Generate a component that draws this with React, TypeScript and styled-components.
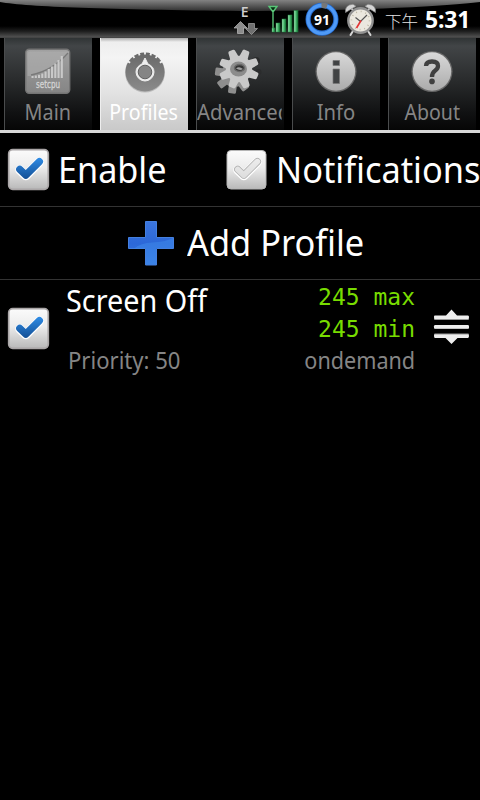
import React from "react";
import styled, { createGlobalStyle } from "styled-components";

const GlobalStyle = createGlobalStyle`
  html, body { margin: 0; background: #000; }
  body { width: 480px; height: 800px; overflow: hidden; }
  svg { display: block; flex: none; }
`;

const sans = `"Noto Sans", "Open Sans", "Noto Sans CJK TC", sans-serif`;

const Screen = styled.main`
  width: 480px;
  height: 800px;
  overflow: hidden;
  display: flex;
  flex-direction: column;
  background: #000;
  color: #fff;
  font-family: ${sans};
`;

const Text = styled.span<{ $size: number; $stretch?: number; $color?: string; $right?: boolean }>`
  display: block;
  flex: none;
  white-space: nowrap;
  font-size: ${(p) => p.$size}px;
  line-height: 1.2;
  color: ${(p) => p.$color ?? "#fff"};
  transform: scaleX(${(p) => p.$stretch ?? 1});
  transform-origin: ${(p) => (p.$right ? "right" : "left")} center;
`;

/* Status bar */
const StatusBar = styled.header`
  height: 38px;
  flex: none;
  display: grid;
  background: linear-gradient(#000 0, #000 26px, #1c1c1c 31px, #505050 37px, #3a3a3a 38px);
  > * { grid-area: 1 / 1; }
`;

const StatusItems = styled.div`
  display: flex;
  align-items: flex-start;
  padding-left: 233px;
`;

const StatusIcon = styled.div<{ $width: number }>`
  width: ${(p) => p.$width}px;
  flex: none;
`;

const Meridiem = styled.span`
  width: 44px;
  padding-left: 4px;
  box-sizing: border-box;
  font: 16.5px/20px "Noto Sans CJK TC", sans-serif;
  font-weight: 300;
  color: #e4e4e4;
  margin-top: 11px;
  white-space: nowrap;
`;

const Clock = styled.span`
  font: bold 23px/28px ${sans};
  margin-top: 5px;
  letter-spacing: -0.2px;
`;

/* Tabs */
const TabBar = styled.nav`
  height: 92px;
  flex: none;
  display: flex;
  gap: 8px;
  padding: 0 4px;
  border-bottom: 3px solid #d8d8d8;
`;

const Tab = styled.div<{ $active?: boolean }>`
  width: 88px;
  box-sizing: border-box;
  overflow: hidden;
  display: flex;
  flex-direction: column;
  align-items: center;
  padding: 9px 1px 0 0;
  border-left: 1px solid ${(p) => (p.$active ? "#eee" : "#4a4c4d")};
  background: ${(p) =>
    p.$active
      ? "linear-gradient(#aaa 0, #eee 4px, #f4f4f4 20px, #e2e2e2 60%, #c9c9c9)"
      : "linear-gradient(#303435 0, #424547 8px, #2a2c2d 45%, #101112 82%, #060606)"};
`;

const TabLabel = styled.span<{ $active?: boolean; $stretch: number; $clip?: boolean }>`
  margin-top: 1px;
  align-self: ${(p) => (p.$clip ? "flex-start" : "center")};
  font-size: 22px;
  line-height: 26px;
  white-space: nowrap;
  color: ${(p) => (p.$active ? "#fff" : "#858585")};
  transform: scaleX(${(p) => p.$stretch});
  transform-origin: ${(p) => (p.$clip ? "left" : "center")};
  ${(p) => p.$clip && "width: 92px; overflow: hidden;"}
`;

/* Content */
const OptionsRow = styled.section`
  height: 73px;
  flex: none;
  display: flex;
  align-items: center;
  border-bottom: 1px solid #333;
`;

const Option = styled.label<{ $width: number }>`
  width: ${(p) => p.$width}px;
  flex: none;
  display: flex;
  align-items: center;
  gap: 8px;
  padding-left: 7px;
  box-sizing: border-box;
`;

const AddRow = styled.section`
  height: 72px;
  flex: none;
  display: flex;
  align-items: center;
  gap: 12px;
  padding-left: 127px;
  border-bottom: 1px solid #333;
`;

const ProfileRow = styled.section`
  height: 98px;
  flex: none;
  display: grid;
  grid-template-columns: 66px 1fr 160px 65px;
`;

const CheckCell = styled.div`
  padding: 27px 0 0 7px;
`;

const ProfileInfo = styled.div`
  display: flex;
  flex-direction: column;
  justify-content: space-between;
  padding: 3px 0 3px;
`;

const Priority = styled.div`
  padding-left: 2px;
`;

const Limits = styled.div`
  display: flex;
  flex-direction: column;
  align-items: flex-end;
  padding-top: 1px;
`;

const Frequency = styled.span`
  font: 23px/32px "DejaVu Sans Mono", monospace;
  color: #78dc00;
  white-space: pre;
`;

const Governor = styled.div`
  padding-top: 1px;
`;

const HandleCell = styled.div`
  padding: 28px 0 0 18px;
`;

function CheckBox({ checked }: { checked?: boolean }) {
  const id = checked ? "tick-on" : "tick-off";
  const mark = "M12.8 21.4 18.8 27.2 32.4 13.6";
  return (
    <svg width="43" height="43" viewBox="0 0 43 43">
      <defs>
        <linearGradient id={`${id}-box`} x2="0" y2="1">
          <stop offset="0" stopColor="#fbfbfb" />
          <stop offset=".45" stopColor="#ececec" />
          <stop offset="1" stopColor="#b9b9b9" />
        </linearGradient>
        <linearGradient id={`${id}-mark`} gradientUnits="userSpaceOnUse" x1="0" y1="10" x2="0" y2="31">
          <stop offset="0" stopColor={checked ? "#2f8be4" : "#ededed"} />
          <stop offset="1" stopColor={checked ? "#145096" : "#dcdcdc"} />
        </linearGradient>
      </defs>
      <rect
        x={checked ? 1.7 : 2} y={checked ? 1.7 : 2.5}
        width={checked ? 39.6 : 39} height={checked ? 39.6 : 38.5} rx="4"
        fill={`url(#${id}-box)`} stroke={checked ? "#aaa6a7" : "#b5b5b5"} strokeWidth={checked ? 1.7 : 1}
      />
      <g fill="none" strokeLinecap="round" strokeLinejoin="round">
        <path d={mark} transform="translate(0 .5)" stroke="#fff" strokeWidth="9.2" />
        {!checked && <path d={mark} stroke="#b4b4b4" strokeWidth="7.4" />}
        <path d={mark} stroke={`url(#${id}-mark)`} strokeWidth={checked ? 7.3 : 5.6} />
      </g>
    </svg>
  );
}

function StatusGloss() {
  return (
    <svg width="480" height="38" viewBox="0 0 480 38">
      <defs>
        <linearGradient id="gloss" gradientUnits="userSpaceOnUse" x1="0" y1="0" x2="0" y2="11">
          <stop offset="0" stopColor="#828282" />
          <stop offset="1" stopColor="#303030" />
        </linearGradient>
      </defs>
      <path d="M0 0H480V2C445 6 365 11 240 11 110 9.5 28 7 0 2Z" fill="url(#gloss)" />
    </svg>
  );
}

function DataIcon() {
  return (
    <svg width="28" height="38" viewBox="233 0 28 38">
      <text x="240.8" y="17" fontSize="14" fontWeight="600" fill="#d0d0d0" fontFamily="Open Sans">E</text>
      <path d="M240.5 21.5 247 28H243.5V33.5H237.5V28H234Z" fill="#8b8b8b" stroke="#bbb" strokeWidth=".7" />
      <path d="M248.5 23.5H254.5V28.5H257.5L251.5 34.5 245.5 28.5H248.5Z" fill="#707070" stroke="#a8a8a8" strokeWidth=".7" />
    </svg>
  );
}

function SignalIcon() {
  return (
    <svg width="43" height="38" viewBox="261 0 43 38">
      <defs>
        <linearGradient id="bars">
          <stop offset="0" stopColor="#b0edc1" />
          <stop offset=".5" stopColor="#45b86b" />
          <stop offset="1" stopColor="#13672f" />
        </linearGradient>
      </defs>
      <path d="M269 6.5H277L273 12ZM273 10V32" fill="#062e12" stroke="#58c577" strokeWidth="1.4" />
      <g fill="url(#bars)" stroke="#228441" strokeWidth=".5">
        <rect x="272" y="28" width="3" height="4" />
        <rect x="276" y="23" width="4" height="9" />
        <rect x="282" y="19" width="4" height="13" />
        <rect x="288" y="15" width="4" height="17" />
        <rect x="294" y="10.5" width="4" height="21.5" />
      </g>
    </svg>
  );
}

function BatteryIcon() {
  return (
    <svg width="38" height="38" viewBox="304 0 38 38">
      <circle cx="322" cy="19.3" r="13.9" fill="#080808" stroke="#2369ce" strokeWidth="5.2" />
      <circle cx="322" cy="19.3" r="14" fill="none" stroke="#4f9af6" strokeWidth="3.4" />
      <path d="M321.5 5.3A14 14 0 0 1 327 6.2" fill="none" stroke="#777" strokeWidth="5.2" />
      <text x="322" y="24.5" fontSize="14" textAnchor="middle" fontWeight="700" fill="#fff" fontFamily="Noto Sans">91</text>
    </svg>
  );
}

function AlarmIcon() {
  return (
    <svg width="39" height="38" viewBox="342 0 39 38">
      <g stroke="#d6d6d6" strokeWidth="2" strokeLinecap="round">
        <path d="M353 31 350.5 35M368 31 370.5 35M352 9 354 12M369 9 367 12" />
      </g>
      <path d="M345.5 12.5Q344.5 5 353 4.2L356 6.2Z" fill="#d5d5d5" stroke="#888" strokeWidth=".7" />
      <path d="M375.5 12.5Q376.5 5 368 4.2L365 6.2Z" fill="#d5d5d5" stroke="#888" strokeWidth=".7" />
      <circle cx="360.5" cy="20.5" r="12.2" fill="#ebe8df" stroke="#919191" strokeWidth="2.4" />
      <circle cx="360.5" cy="20.5" r="9" fill="none" stroke="#b5ae99" strokeWidth="1.6" strokeDasharray=".8 3.91" />
      <path d="M355.5 17.5 360.5 21.5 367 15" fill="none" stroke="#555" strokeWidth="1.2" />
      <path d="M361 20.5 356.5 28" stroke="#e43434" strokeWidth="1.6" />
    </svg>
  );
}

const tabIcon = { width: 54, height: 50, viewBox: "0 0 54 50" };

function SetCpuIcon() {
  return (
    <svg {...tabIcon}>
      <defs>
        <linearGradient id="cpu" x2="0" y2="1">
          <stop offset="0" stopColor="#a1a1a1" />
          <stop offset="1" stopColor="#858585" />
        </linearGradient>
      </defs>
      <rect x="4.7" y="2.2" width="44" height="44" rx="3.5" fill="url(#cpu)" stroke="#747474" strokeWidth="1.4" />
      <path d="M10 29Q31 25 48 6V4.5H9Q6.500 4.500 6.500 7V29Z" fill="#b0b0b0" opacity=".55" />
      <path d="M10 28Q31 24 47 6" fill="none" stroke="#797979" strokeWidth="1.3" />
      <g fill="#c9c9c9">
        {[2, 2.5, 3.2, 4.5, 6.5, 9, 11.5, 14.5, 18, 22].map((h, i) => (
          <rect key={i} x={10.5 + i * 3.25} y={31 - h} width="2.1" height={h} />
        ))}
      </g>
      <text x="27" y="40.5" fontSize="10" textAnchor="middle" textLength="24" lengthAdjust="spacingAndGlyphs" fill="#d4d4d4" stroke="#d4d4d4" strokeWidth=".3" fontFamily="DejaVu Sans">setcpu</text>
    </svg>
  );
}

function DialIcon() {
  return (
    <svg {...tabIcon}>
      <defs>
        <linearGradient id="dial" x2="0" y2="1">
          <stop offset="0" stopColor="#686868" />
          <stop offset="1" stopColor="#8b8b8b" />
        </linearGradient>
      </defs>
      <circle cx="28" cy="25.6" r="20" fill="#bbb" />
      <circle cx="28" cy="25" r="19.5" fill="url(#dial)" />
      <g stroke="#f2f2f2" strokeWidth="1.8">
        {[-58, -37, -18, 0, 18, 37, 58].map((a) => (
          <path key={a} d="M28 4V7.500" transform={`rotate(${a} 28 25)`} />
        ))}
      </g>
      <path d="M28 11 31 17Q37 19.500 37 25A9 9 0 0 1 19 25Q19 19.500 25 17Z" fill="#eee" stroke="#eee" strokeWidth="1" />
      <circle cx="28" cy="25" r="6.8" fill="#858585" stroke="#606060" strokeWidth="1" />
    </svg>
  );
}

function GearIcon() {
  const teeth = [8, 53, 98, 143, 188, 233, 278, 323];
  return (
    <svg {...tabIcon}>
      <circle cx="43" cy="14" r="4" fill="#2b2c2d" />
      <circle cx="45.500" cy="25" r="3" fill="#2b2c2d" />
      <g transform="translate(-5.500 4)" fill="#8e8e8e">
        <circle cx="27" cy="23" r="13" />
        {teeth.slice(3, 7).map((a) => <rect key={a} x="23" y="3.500" width="8" height="10" rx="1.5" transform={`rotate(${a} 27 23)`} />)}
      </g>
      <g transform="translate(-1 -1)">
        <g fill="#c9c9c9">
          <circle cx="27" cy="23" r="13.2" />
          {teeth.map((a) => <path key={a} d="M22.500 12 23.500 4Q24 3 25 3H29Q30 3 30.500 4L31.500 12Z" transform={`rotate(${a + 14} 27 23)`} />)}
        </g>
        <ellipse cx="26.500" cy="23" rx="8.500" ry="7.500" fill="#8c8c8c" />
        <ellipse cx="27.500" cy="22" rx="5" ry="3.500" fill="#333" stroke="#696969" strokeWidth="1.500" />
        <path d="M24 22.500Q27 20 31 23 28 25 24 22.500" fill="#a0a0a0" />
      </g>
    </svg>
  );
}

function DiscIcon({ kind }: { kind: "info" | "help" }) {
  return (
    <svg {...tabIcon}>
      <defs>
        <linearGradient id={`disc-${kind}`} x2="0" y2="1">
          <stop offset="0" stopColor="#d9d9d9" />
          <stop offset="1" stopColor="#ababab" />
        </linearGradient>
      </defs>
      <circle cx="27" cy="24.5" r="20.5" fill="#686868" />
      <circle cx="27" cy="24.5" r="19.2" fill={`url(#disc-${kind})`} />
      {kind === "info" ? (
        <path d="M24 13.5H30.5V18.5H24ZM24 22H30.5V36.5H24Z" fill="#414344" stroke="#777" strokeWidth=".7" />
      ) : (
        <>
          <path d="M21 19Q21.2 14.5 27 14.5 33 14.5 33 19 33 21.7 30 23.8 27 26 27 30" fill="none" stroke="#404040" strokeWidth="4.3" />
          <circle cx="27" cy="34.4" r="2.8" fill="#404040" />
        </>
      )}
    </svg>
  );
}

function PlusIcon() {
  return (
    <svg width="48" height="48" viewBox="0 0 48 48">
      <defs>
        <linearGradient id="plus" x2="0" y2="1">
          <stop offset="0" stopColor="#3b75dd" />
          <stop offset=".5" stopColor="#2c68d8" />
          <stop offset="1" stopColor="#3578e0" />
        </linearGradient>
      </defs>
      <path d="M18.500 2.500H29.500V18.500H46.500V29.500H29.500V46H18.500V29.500H1.500V18.500H18.500Z" fill="url(#plus)" stroke="#4480e0" strokeWidth="1" />
      <path d="M7 29.500Q14 24 25 23.500 38 23 46 19V29H29V45.500H19V29.500Z" fill="#4596f1" opacity=".4" />
    </svg>
  );
}

function DragHandle() {
  return (
    <svg width="36" height="38" viewBox="0 0 36 38">
      <g transform="translate(.5 0)">
        <g fill="#999">
          <rect x=".5" y="9" width="35" height="3" rx="1" />
          <rect x=".5" y="18" width="35" height="3" rx="1" />
          <rect x=".5" y="25.500" width="35" height="2" rx="1" />
        </g>
        <g fill="#eee">
          <path d="M18 1.500 23.500 7.500H34.500Q35.500 7.500 35.500 9T34.500 11H1.500Q.5 11 .5 9T1.500 7.500H12.500Z" />
          <rect x=".5" y="17" width="35" height="3.400" rx="1.200" />
          <path d="M1.500 26.500H34.500Q35.500 26.500 35.500 28T34.500 30H24L18 36 12 30H1.500Q.5 30 .5 28T1.500 26.500Z" />
        </g>
      </g>
    </svg>
  );
}

export default function App() {
  return (
    <Screen>
      <GlobalStyle />
      <StatusBar>
        <StatusGloss />
        <StatusItems>
          <StatusIcon $width={28}><DataIcon /></StatusIcon>
          <StatusIcon $width={43}><SignalIcon /></StatusIcon>
          <StatusIcon $width={38}><BatteryIcon /></StatusIcon>
          <StatusIcon $width={39}><AlarmIcon /></StatusIcon>
          <Meridiem>下午</Meridiem>
          <Clock>5:31</Clock>
        </StatusItems>
      </StatusBar>
      <TabBar>
        <Tab><SetCpuIcon /><TabLabel $stretch={0.9}>Main</TabLabel></Tab>
        <Tab $active><DialIcon /><TabLabel $active $stretch={0.89}>Profiles</TabLabel></Tab>
        <Tab><GearIcon /><TabLabel $clip $stretch={0.92}>Advanced</TabLabel></Tab>
        <Tab><DiscIcon kind="info" /><TabLabel $stretch={0.92}>Info</TabLabel></Tab>
        <Tab><DiscIcon kind="help" /><TabLabel $stretch={0.89}>About</TabLabel></Tab>
      </TabBar>
      <OptionsRow>
        <Option $width={218}>
          <CheckBox checked />
          <Text $size={36} $stretch={0.95}>Enable</Text>
        </Option>
        <Option $width={262}>
          <CheckBox />
          <Text $size={36} $stretch={0.955}>Notifications</Text>
        </Option>
      </OptionsRow>
      <AddRow>
        <PlusIcon />
        <Text $size={36} $stretch={0.955}>Add Profile</Text>
      </AddRow>
      <ProfileRow>
        <CheckCell><CheckBox checked /></CheckCell>
        <ProfileInfo>
          <Text $size={30} $stretch={0.96}>Screen Off</Text>
          <Priority><Text $size={24} $stretch={0.92} $color="#858585">Priority: 50</Text></Priority>
        </ProfileInfo>
        <Limits>
          <Frequency>245 max</Frequency>
          <Frequency>245 min</Frequency>
          <Governor><Text $size={24} $stretch={0.9} $color="#858585" $right>ondemand</Text></Governor>
        </Limits>
        <HandleCell><DragHandle /></HandleCell>
      </ProfileRow>
    </Screen>
  );
}
